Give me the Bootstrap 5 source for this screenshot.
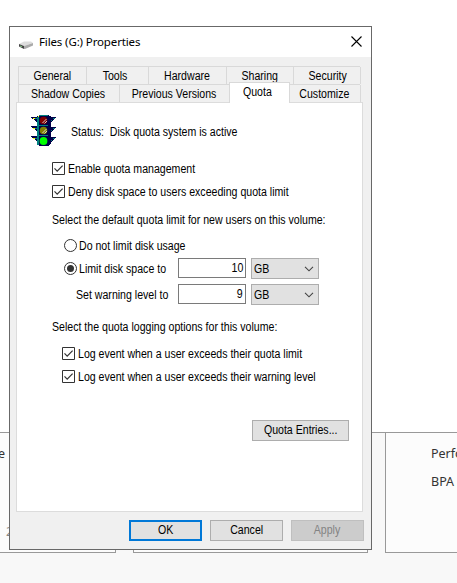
<!DOCTYPE html>
<html lang="en">
<head>
<meta charset="utf-8">
<meta name="viewport" content="width=device-width, initial-scale=1">
<title>Files (G:) Properties</title>
<link href="https://cdn.jsdelivr.net/npm/bootstrap@5.3.0/dist/css/bootstrap.min.css" rel="stylesheet">
<style>
body{width:457px;height:583px;overflow:hidden;background:#fff;color:#000;font:12px/14px "Liberation Sans",Arial,sans-serif}
/* server dashboard behind the dialog */
.dash{height:151px;margin-top:432px;background:#f8f8f8;border-top:1px solid #999;font:12.5px/16px "Noto Sans",sans-serif;color:#333}
.tile{height:120px;background:#fcfcfc;border:1px solid #999;border-top:0;flex:none}
.tile-a{width:116px;border-left:0}
.tile-b{width:235px;margin:0 17px}
.tile-c{width:72px;border-right:0;padding:13px 0 0 45px;overflow:hidden}
.tile-c div{height:28px;white-space:nowrap}
.peek-e{margin:13px 0 0 -2px}
.peek-n{margin:62px 0 0 6px;color:#888}
/* dialog window */
.dlg{left:9px;top:26px;width:363px;height:524px;background:#f0f0f0;border:1px solid #686868}
.dlg-title{height:30px;background:#fff;padding:0 9px 2px 8px;font:11.5px/28px "Noto Sans",sans-serif;letter-spacing:-.13px}
/* condensed dialog face */
.nar{display:inline-block;transform:scaleX(.882);transform-origin:left;white-space:pre}
.nar-c{display:inline-block;transform:scaleX(.882);white-space:pre}
.tabs-row{height:18px;margin:0 11px 0 8px;border-left:1px solid #d9d9d9;border-top:1px solid #d9d9d9}
.tabs-row>div{height:100%;border-right:1px solid #d9d9d9;text-align:center;line-height:18px;flex:none;white-space:nowrap;padding-right:1px}
.tabs-row .tab-on{height:21px;margin:-3px -1px 0;width:61px!important;background:#fff;border:1px solid #d9d9d9;border-bottom:0;position:relative;z-index:1;line-height:19px;padding-right:4px}
.sheet{width:347px;height:410px;margin-left:6px;border:1px solid #dcdcdc;background:#fff}
.ln{height:23px;white-space:nowrap}
.ln svg{flex:none}
.lab{margin-left:3px}
.in1{padding-left:35px}
.in2{padding-left:45px}
.fld{width:68px;height:20px;border:1px solid #7a7a7a;text-align:right;padding:0 2px;line-height:18px;margin-bottom:1px}
.fld .nar-c{transform-origin:right}
.sel{width:68px;height:21px;border:1px solid #adadad;background:#e1e1e1;padding:0 4px 0 2px;margin-left:5px}
.pb{height:21px;border:1px solid #adadad;background:#e1e1e1;border-radius:0;font-size:12px;line-height:19px;padding:0;color:#000;width:73px}
.pb-ok{border:2px solid #0078d7;line-height:17px}
.pb-off{background:#ccc;border-color:#bfbfbf;color:#838383}
.pb-wide{width:97px}
</style>
</head>
<body>
<svg width="0" height="0" class="position-absolute">
<defs>
<symbol id="chk" viewBox="0 0 13 13"><path d="M.5.5h12v12H.5z" fill="#fff" stroke="#333"/><path d="M2.5 6.4l2.7 2.8L10.6 3.6" fill="none" stroke="#333" stroke-width="1.2"/></symbol>
<symbol id="rad" viewBox="0 0 13 13"><circle cx="6.5" cy="6.5" r="6" fill="#fff" stroke="#333"/></symbol>
<symbol id="chev" viewBox="0 0 10 6"><path d="M1 .8l4 4 4-4" fill="none" stroke="#444" stroke-width="1.1"/></symbol>
</defs>
</svg>
<main class="dash d-flex align-items-start">
  <div class="tile tile-a"><div class="peek-e">e</div><div class="peek-n">2</div></div>
  <div class="tile tile-b"></div>
  <div class="tile tile-c"><div>Performance</div><div>BPA</div></div>
</main>

<section class="dlg position-absolute d-flex flex-column">
  <header class="dlg-title d-flex align-items-center">
    <svg width="15" height="9" viewBox="0 0 15 9" style="margin-top:6px"><path d="M1 4L6 1.500h7l2 1.500-9 3z" fill="#ddd"/><path d="M1 4l5 2v3L1 6.500z" fill="#444"/><path d="M6 6l9-3v2.500L7 9H6z" fill="#aaa"/><path d="M2 6l2 .8" stroke="#8c8"/></svg>
    <span style="margin:1px 0 0 6px">Files (G:) Properties</span>
    <svg class="ms-auto" width="11" height="11" viewBox="0 0 11 11"><path d="M.5.5l10 10M10.500 .5l-10 10" stroke="#000" stroke-width="1.100"/></svg>
  </header>
  <div style="height:9px"></div>
  <div class="tabs-row d-flex"><div style="width:68px"><span class="nar-c">General</span></div><div style="width:62px;padding-right:5px"><span class="nar-c">Tools</span></div><div style="width:78px"><span class="nar-c">Hardware</span></div><div style="width:67px;padding:0"><span class="nar-c">Sharing</span></div><div style="width:67px;padding:0 0 0 2px"><span class="nar-c">Security</span></div></div>
  <div class="tabs-row d-flex"><div style="width:101px"><span class="nar-c">Shadow Copies</span></div><div style="width:110px;padding:0"><span class="nar-c">Previous Versions</span></div><div class="tab-on"><span class="nar-c">Quota</span></div><div style="width:72px;padding:0"><span class="nar-c">Customize</span></div></div>
  <div class="sheet">
    <div class="d-flex align-items-center" style="height:54px;padding:2px 0 0 14px">
      <svg width="26" height="32" viewBox="0 0 26 32" shape-rendering="crispEdges">
        <path d="M0 2h6V1h2V0h10v1h2v1h5v1h-1v1h-1v1h-1v1h-1v1h-1v5h5v1h-1v1h-1v1h-1v1h-1v1h-1v5h5v1h-1v1h-1v1h-1v1h-1v1h-1v2h-1v1h-1v1H8v-1H7v-1H6v-3H5v-1H4v-1H3v-1H1v-1H0v-1h6v-5H5v-1H4v-1H3v-1H1v-1H0v-1h6V7H5V6H4V5H3V4H1V3H0z" fill="#000048"/>
        <path d="M6 2h2v28H6zM8 0h9v1H8zM8 10h9v1H8zM8 20h9v1H8z" fill="#008080"/>
        <path d="M2 3h2v1H2zM2 13h2v1H2zM2 23h2v1H2zM7 1h1v1H7z" fill="#ff0"/>
        <path d="M4 3h2v1H4zM4 13h2v1H4zM4 23h2v1H4zM22 3h2v1h-2zM22 13h2v1h-2zM22 23h2v1h-2zM20 5h1v1h-1zM20 15h1v1h-1zM20 25h1v1h-1z" fill="#008080"/>
        <g shape-rendering="auto"><circle cx="12.500" cy="5.500" r="3.800" fill="#800000"/><circle cx="12.500" cy="15.500" r="3.800" fill="#808000"/><circle cx="12.500" cy="26" r="3.900" fill="#0f0"/><path d="M11.500 8l4-4M13.500 8.500l2.500-2.500M11.500 18l4-4M13.500 18.500l2.500-2.500" stroke="#ddd" stroke-width=".9"/></g>
      </svg>
      <span class="nar" style="margin:2px 0 0 14px">Status:  Disk quota system is active</span>
    </div>
    <div class="ln in1 d-flex align-items-center"><svg width="13" height="13"><use href="#chk"/></svg><span class="lab nar">Enable quota management</span></div>
    <div class="ln in1 d-flex align-items-center"><svg width="13" height="13"><use href="#chk"/></svg><span class="lab nar">Deny disk space to users exceeding quota limit</span></div>
    <div class="in1 d-flex align-items-center" style="height:31px;padding-top:2px"><span class="nar">Select the default quota limit for new users on this volume:</span></div>
    <div class="ln d-flex align-items-center" style="padding-left:47px"><svg width="13" height="13"><use href="#rad"/></svg><span class="lab nar" style="margin-left:2px">Do not limit disk usage</span></div>
    <div class="ln d-flex align-items-center" style="padding-left:47px"><svg width="13" height="13"><use href="#rad"/><circle cx="6.500" cy="6.500" r="3.500" fill="#333"/></svg><span class="lab nar" style="margin-left:2px;width:99px">Limit disk space to</span><div class="fld"><span class="nar-c">10</span></div><div class="sel d-flex align-items-center"><span class="nar">GB</span><svg class="ms-auto" width="10" height="6"><use href="#chev"/></svg></div></div>
    <div class="d-flex align-items-center" style="height:29px;padding-left:59px"><span class="nar" style="width:102px">Set warning level to</span><div class="fld"><span class="nar-c">9</span></div><div class="sel d-flex align-items-center"><span class="nar">GB</span><svg class="ms-auto" width="10" height="6"><use href="#chev"/></svg></div></div>
    <div class="in1 d-flex align-items-center" style="height:33px;padding-top:2px"><span class="nar">Select the quota logging options for this volume:</span></div>
    <div class="ln in2 d-flex align-items-center"><svg width="13" height="13"><use href="#chk"/></svg><span class="lab nar">Log event when a user exceeds their quota limit</span></div>
    <div class="ln in2 d-flex align-items-center"><svg width="13" height="13"><use href="#chk"/></svg><span class="lab nar">Log event when a user exceeds their warning level</span></div>
    <div class="d-flex justify-content-end" style="padding:32px 13px 0 0"><button class="btn pb pb-wide"><span class="nar-c">Quota Entries...</span></button></div>
  </div>
  <footer class="d-flex justify-content-end" style="padding:8px 7px 0 0;gap:8px"><button class="btn pb pb-ok"><span class="nar-c">OK</span></button><button class="btn pb"><span class="nar-c">Cancel</span></button><button class="btn pb pb-off"><span class="nar-c">Apply</span></button></footer>
</section>
<script src="https://cdn.jsdelivr.net/npm/bootstrap@5.3.0/dist/js/bootstrap.bundle.min.js"></script>
</body>
</html>
